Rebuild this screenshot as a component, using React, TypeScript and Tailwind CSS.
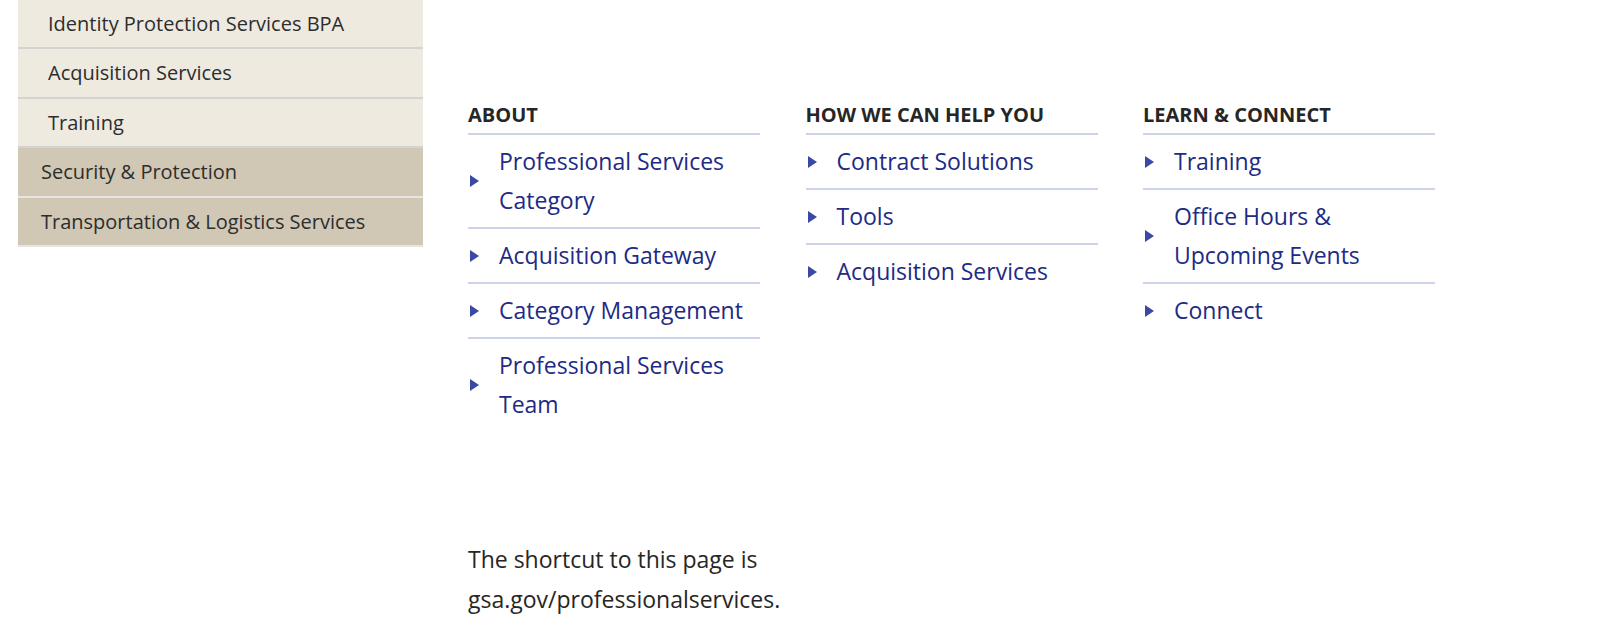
const sideNav = [
  { label: "Identity Protection Services BPA", sub: true, h: "h-[49px]" },
  { label: "Acquisition Services", sub: true, h: "h-[50px]" },
  { label: "Training", sub: true, h: "h-[49px]" },
  { label: "Security & Protection", sub: false, h: "h-[50px]" },
  { label: "Transportation & Logistics Services", sub: false, h: "h-[49px]" },
]

const columns = [
  {
    title: "About",
    links: [
      "Professional Services Category",
      "Acquisition Gateway",
      "Category Management",
      "Professional Services Team",
    ],
  },
  {
    title: "How We Can Help You",
    links: ["Contract Solutions", "Tools", "Acquisition Services"],
  },
  {
    title: "Learn & Connect",
    links: ["Training", "Office Hours & Upcoming Events", "Connect"],
  },
]

function Caret() {
  return (
    <svg width="9" height="12" viewBox="0 0 9 12" className="ml-[2px] shrink-0">
      <polygon points="0,0 9,6 0,12" fill="#3a49a3" />
    </svg>
  )
}

export default function App() {
  return (
    <div className="flex min-h-[633px] bg-white font-['Open_Sans',sans-serif]">
      <nav className="ml-[18px] w-[405px] shrink-0 self-start">
        <ul>
          {sideNav.map((item) =>
            item.sub ? (
              <li
                key={item.label}
                className={`${item.h} flex items-center border-b-2 border-[#d5d3cf] bg-[#eeeae0] pl-[30px] text-[20px] text-[#2d2d2d]`}
              >
                {item.label}
              </li>
            ) : (
              <li
                key={item.label}
                className={`${item.h} flex items-center border-b-2 border-[#e7e5e1] bg-[#d0c7b4] pl-[23px] text-[20px] text-[#2d2d2d]`}
              >
                {item.label}
              </li>
            )
          )}
        </ul>
      </nav>

      <main className="ml-[45px] pt-[101px]">
        <div className="flex gap-[45.5px]">
          {columns.map((col) => (
            <section key={col.title} className="w-[292px]">
              <h2 className="border-b-2 border-[#cdd4ea] pb-[4px] text-[20px] font-bold uppercase leading-[28px] text-[#262626]">
                {col.title}
              </h2>
              <ul className="divide-y-2 divide-[#cdd4ea]">
                {col.links.map((link) => (
                  <li key={link} className="flex items-center py-[7px]">
                    <div className="flex w-[31px] shrink-0">
                      <Caret />
                    </div>
                    <a className="text-[23px] leading-[39px] text-[#212a84]">{link}</a>
                  </li>
                ))}
              </ul>
            </section>
          ))}
        </div>

        <p className="mt-[108px] w-[292px] text-[23px] leading-[40px] text-[#262626]">
          The shortcut to this page is gsa.gov/professionalservices.
        </p>
      </main>
    </div>
  )
}
